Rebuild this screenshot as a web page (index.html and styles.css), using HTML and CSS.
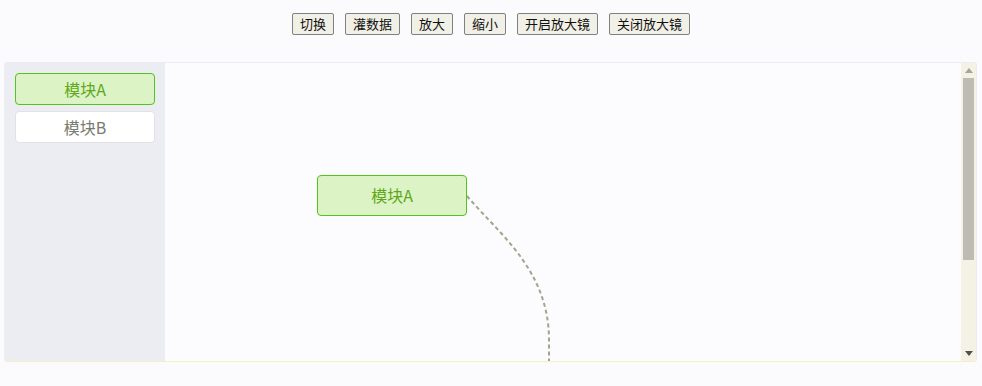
FILE: index.html
```html
<!DOCTYPE html>
<html lang="zh">
<head>
<meta charset="utf-8">
<link rel="stylesheet" href="styles.css">
</head>
<body>
<div class="toolbar">
  <button class="btn">切换</button>
  <button class="btn">灌数据</button>
  <button class="btn">放大</button>
  <button class="btn">缩小</button>
  <button class="btn">开启放大镜</button>
  <button class="btn">关闭放大镜</button>
</div>
<div class="board">
  <div class="sidebar">
    <div class="item item-active">模块A</div>
    <div class="item">模块B</div>
  </div>
  <div class="canvas">
    <svg class="edges" width="794" height="298" viewBox="166 63 794 298">
      <path d="M468 196 C500 234 550 270 550 340 L550 500" fill="none" stroke="#a4a48e" stroke-width="2" stroke-dasharray="4 3"/>
    </svg>
    <div class="node">模块A</div>
  </div>
  <div class="scrollbar">
    <div class="sb-btn">
      <svg width="8" height="5" viewBox="0 0 8 5"><path d="M0 5 L4 0 L8 5 Z" fill="#a3a3a3"/></svg>
    </div>
    <div class="sb-track">
      <div class="sb-thumb"></div>
    </div>
    <div class="sb-btn">
      <svg width="8" height="5" viewBox="0 0 8 5"><path d="M0 0 L8 0 L4 5 Z" fill="#505050"/></svg>
    </div>
  </div>
</div>
</body>
</html>
```
FILE: styles.css
```css
html, body {
  margin: 0;
  padding: 0;
  background: #fbfbfd;
  font-family: "Noto Sans CJK SC", "Liberation Sans", sans-serif;
}
.toolbar {
  display: flex;
  justify-content: center;
  gap: 11px;
  padding-top: 13px;
  height: 22px;
  margin-bottom: 27px;
}
.btn {
  box-sizing: border-box;
  height: 22px;
  padding: 0 7px;
  font-family: "Noto Sans CJK SC", sans-serif;
  font-size: 13px;
  line-height: 20px;
  color: #111;
  background: #f1f0e6;
  border: 1px solid #808080;
  border-radius: 2px;
}
.board {
  box-sizing: border-box;
  margin: 0 5px 0 4px;
  height: 300px;
  display: flex;
  border: 1px solid #ececf2;
  border-bottom-color: #f3f0c8;
  border-radius: 3px;
  overflow: hidden;
}
.sidebar {
  width: 160px;
  flex: none;
  box-sizing: border-box;
  padding: 10px;
  background: #ececf3;
  display: flex;
  flex-direction: column;
  gap: 6px;
}
.item {
  box-sizing: border-box;
  height: 32px;
  width: 140px;
  line-height: 30px;
  text-align: center;
  font-size: 16px;
  color: #7a7a70;
  background: #ffffff;
  border: 1px solid #e2e2e6;
  border-radius: 4px;
}
.item-active {
  background: #dcf3c6;
  border-color: #52c41a;
  color: #5fa81a;
}
.canvas {
  flex: 1;
  position: relative;
  overflow: hidden;
  background: #fcfcfe;
}
.edges {
  position: absolute;
  left: 0;
  top: 0;
}
.node {
  position: absolute;
  left: 152px;
  top: 112px;
  box-sizing: border-box;
  width: 150px;
  height: 41px;
  line-height: 39px;
  text-align: center;
  font-size: 16px;
  color: #5fa81a;
  background: #dcf3c6;
  border: 1px solid #52c41a;
  border-radius: 4px;
}
.scrollbar {
  width: 15px;
  flex: none;
  display: flex;
  flex-direction: column;
  background: #f3f2e4;
}
.sb-btn {
  height: 15px;
  flex: none;
  display: flex;
  align-items: center;
  justify-content: center;
}
.sb-track {
  flex: 1;
  padding: 0 2px;
}
.sb-thumb {
  height: 182px;
  background: #bcbcb4;
}
```
